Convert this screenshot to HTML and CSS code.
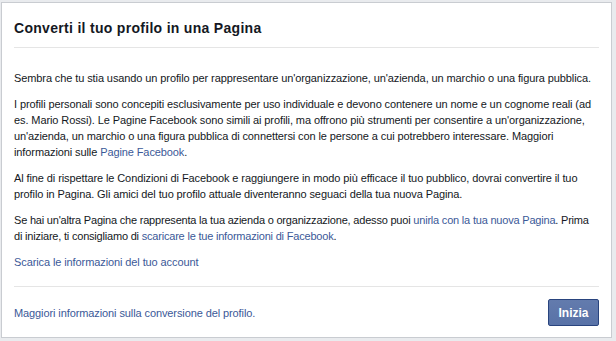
FILE: index.html
```html
<!DOCTYPE html>
<html lang="it">
<head>
    <meta charset="UTF-8">
    <title>Converti il tuo profilo in una Pagina</title>
    <link rel="stylesheet" href="styles.css">
</head>
<body>
<div class="dialog">
    <div class="dialog-header">
        <h2 class="dialog-title">Converti il tuo profilo in una Pagina</h2>
    </div>

    <div class="dialog-body">
        <p>Sembra che tu stia usando un profilo per rappresentare un'organizzazione, un'azienda, un marchio o una figura pubblica.</p>
        <p>I profili personali sono concepiti esclusivamente per uso individuale e devono contenere un nome e un cognome reali (ad es. Mario Rossi). Le Pagine Facebook sono simili ai profili, ma offrono più strumenti per consentire a un'organizzazione, un'azienda, un marchio o una figura pubblica di connettersi con le persone a cui potrebbero interessare. Maggiori informazioni sulle <a href="#">Pagine Facebook</a>.</p>
        <p>Al fine di rispettare le Condizioni di Facebook e raggiungere in modo più efficace il tuo pubblico, dovrai convertire il tuo profilo in Pagina. Gli amici del tuo profilo attuale diventeranno seguaci della tua nuova Pagina.</p>
        <p class="tight">Se hai un'altra Pagina che rappresenta la tua azienda o organizzazione, adesso puoi <a href="#">unirla con la tua nuova Pagina</a>. Prima di iniziare, ti consigliamo di <a href="#">scaricare le tue informazioni di Facebook</a>.</p>
        <p><a href="#">Scarica le informazioni del tuo account</a></p>
    </div>

    <div class="dialog-footer">
        <a href="#" class="footer-link">Maggiori informazioni sulla conversione del profilo.</a>
        <button class="btn-primary">Inizia</button>
    </div>
</div>
</body>
</html>
```

FILE: styles.css
```css
body { margin: 0; padding: 2px 4px 3px 1px; background: #e9ebee; font-family: "Liberation Sans", Arial, sans-serif; font-size: 11px; color: #141823; }
a { color: #3b5998; text-decoration: none; }
.dialog { background: #fff; border: 1px solid #c9ccd1; box-sizing: border-box; height: 336px; display: flex; flex-direction: column; }
.dialog-header { margin: 0 12px; padding: 16px 0 10px; border-bottom: 1px solid #e5e5e5; }
.dialog-title { margin: 0; font-size: 14px; font-weight: bold; line-height: 18px; letter-spacing: 0.3px; }
.dialog-body { flex: 1; padding: 22px 12px 0; line-height: 16px; letter-spacing: -0.1px; }
.dialog-body p { margin: 0 0 10px; }
.dialog-body p.tight { letter-spacing: -0.2px; }
.dialog-footer { margin: 0 12px; padding: 12px 0 11px; border-top: 1px solid #e5e5e5; display: flex; align-items: center; justify-content: space-between; }
.footer-link { letter-spacing: -0.1px; }
.btn-primary { width: 51px; height: 27px; padding: 0; border: 1px solid #29447e; border-radius: 2px; background: linear-gradient(#637bad, #5872a7); color: #fff; font-family: inherit; font-size: 12px; font-weight: bold; cursor: pointer; }
```
